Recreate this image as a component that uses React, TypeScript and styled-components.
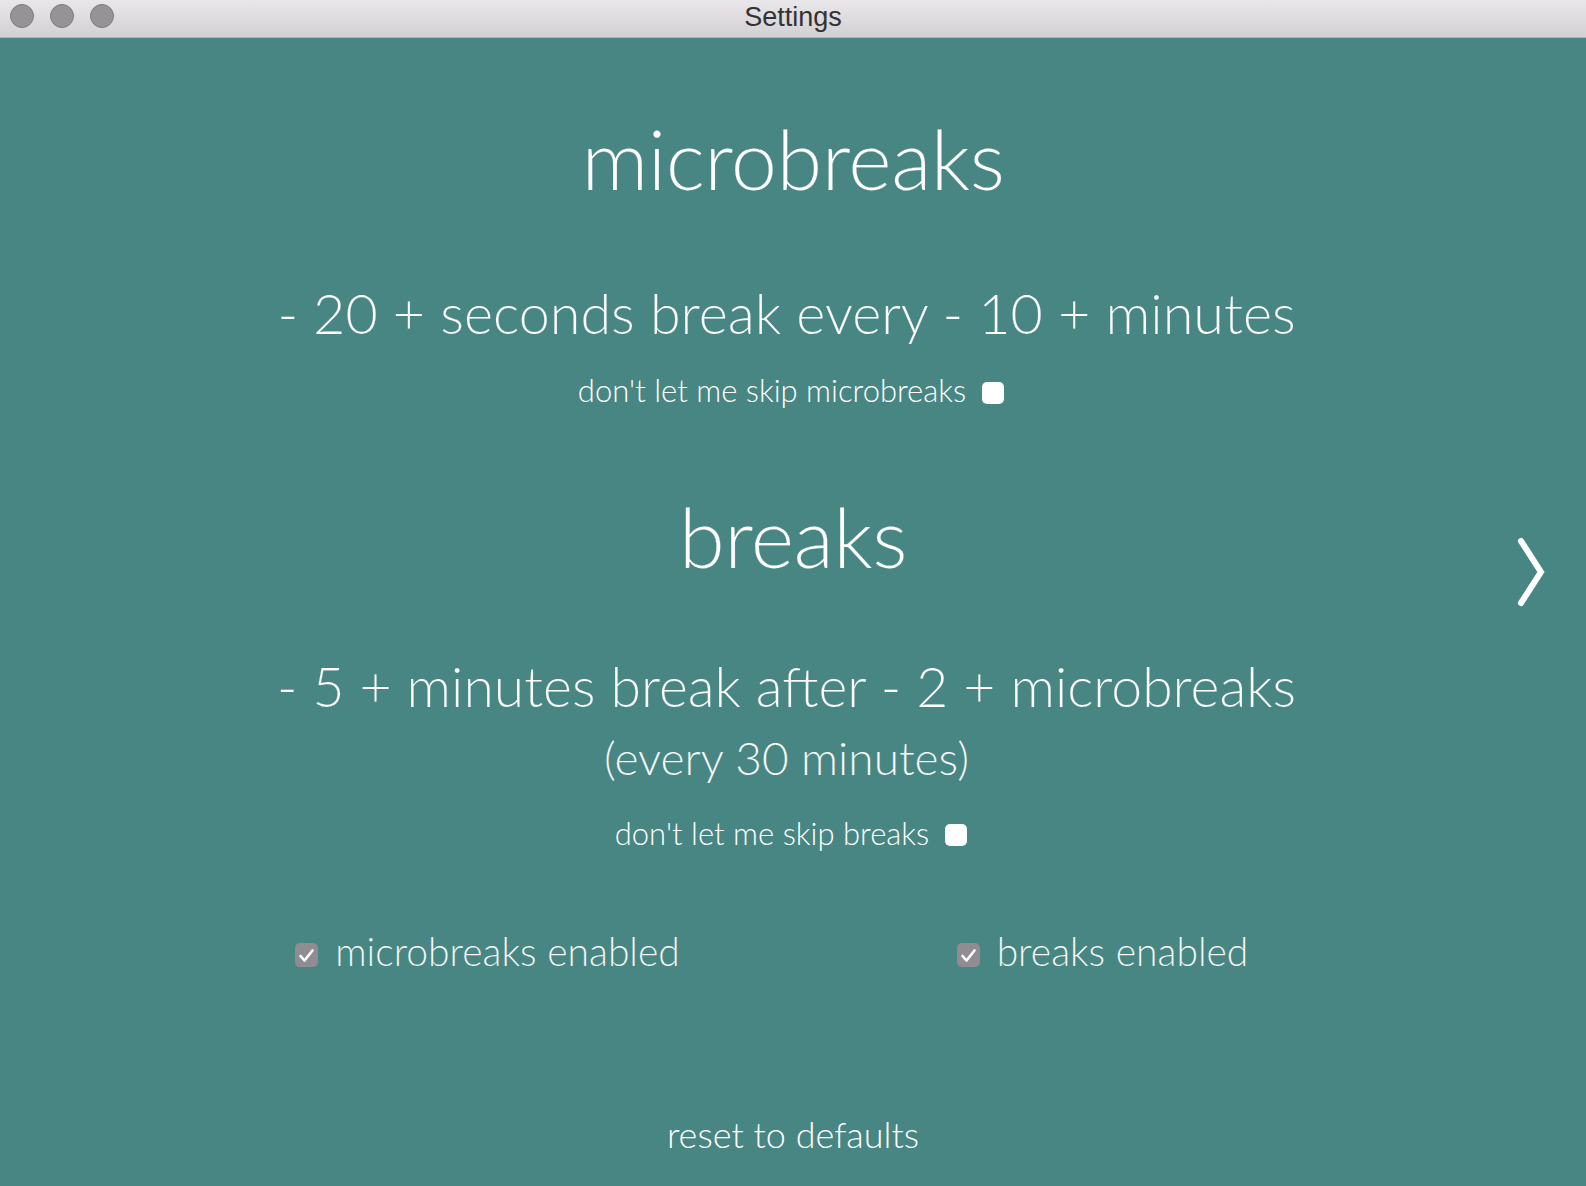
import React from "react";
import styled, { createGlobalStyle } from "styled-components";

const BG = "#488683";

const GlobalStyle = createGlobalStyle`
  html, body {
    margin: 0;
    padding: 0;
    background: ${BG};
  }
  body {
    font-family: Lato, "Open Sans", sans-serif;
    color: #ffffff;
  }
  * { box-sizing: border-box; }
`;

const Window = styled.div`
  display: flex;
  flex-direction: column;
  min-height: 100vh;
  background: ${BG};
`;

const TitleBar = styled.div`
  position: relative;
  height: 38px;
  display: flex;
  align-items: center;
  justify-content: center;
  background: linear-gradient(#e9e7e9, #d2d0d2);
  border-bottom: 1px solid #b3b1b3;
`;

const Lights = styled.div`
  position: absolute;
  left: 10px;
  top: 4px;
  display: flex;
  gap: 16px;
`;

const Light = styled.span`
  width: 24px;
  height: 24px;
  border-radius: 50%;
  background: #959396;
  border: 1px solid #7d7b7f;
`;

const Title = styled.div`
  font-family: "Liberation Sans", Arial, sans-serif;
  font-size: 27px;
  color: #333233;
  margin-top: -2px;
`;

const Body = styled.main`
  position: relative;
  flex: 1;
  display: flex;
  flex-direction: column;
  align-items: center;
  padding-top: 71px;
  font-weight: 300;
  -webkit-text-stroke: 0.012em ${BG};
`;

const Heading = styled.h1<{ $gap?: number }>`
  margin: ${(p) => p.$gap ?? 0}px 0 0;
  font-size: 83px;
  font-weight: 300;
  line-height: 1.2;
  letter-spacing: -0.5px;
`;

const Line = styled.div<{ $size: number; $gap: number }>`
  margin-top: ${(p) => p.$gap}px;
  padding-right: 13px;
  font-size: ${(p) => p.$size}px;
  line-height: 1.2;
  white-space: nowrap;
`;

const Step = styled.span`
  cursor: pointer;
`;

const SkipRow = styled.label<{ $gap: number }>`
  margin-top: ${(p) => p.$gap}px;
  padding-right: 4px;
  display: flex;
  align-items: center;
  gap: 16px;
  font-size: 31px;
  line-height: 1.2;
  -webkit-text-stroke: 0;
`;

const WhiteBox = styled.span`
  width: 22px;
  height: 22px;
  border-radius: 5px;
  background: #ffffff;
  margin-top: 4px;
`;

const EnabledGrid = styled.div`
  margin-top: 76px;
  width: 1230px;
  display: grid;
  grid-template-columns: 1fr 1fr;
  margin-left: 4px;
`;

const EnabledItem = styled.label`
  justify-self: center;
  display: flex;
  align-items: center;
  gap: 17px;
  font-size: 39px;
  line-height: 1.2;
`;

const GreyBox = styled.span`
  width: 23px;
  height: 24px;
  border-radius: 5px;
  background: #908c92;
  display: flex;
  align-items: center;
  justify-content: center;
  margin-top: 8px;
`;

const Reset = styled.div`
  margin-top: 138px;
  font-size: 36px;
  font-weight: 300;
  line-height: 1.2;
  -webkit-text-stroke: 0;
  cursor: pointer;
`;

const NextArrow = styled.div`
  position: absolute;
  right: 41px;
  top: 499px;
  width: 28px;
  height: 70px;
  cursor: pointer;
`;

const Check = () => (
  <svg width="17" height="15" viewBox="0 0 17 15">
    <polyline
      points="2.5,8 6.5,12.5 14.5,2.5"
      fill="none"
      stroke="#ffffff"
      strokeWidth="2.6"
      strokeLinecap="round"
      strokeLinejoin="round"
    />
  </svg>
);

export default function App() {
  return (
    <>
      <GlobalStyle />
      <Window>
        <TitleBar>
          <Lights>
            <Light />
            <Light />
            <Light />
          </Lights>
          <Title>Settings</Title>
        </TitleBar>
        <Body>
          <Heading>microbreaks</Heading>
          <Line $size={55.7} $gap={71}>
            <Step>-</Step> 20 <Step>+</Step> seconds break every <Step>-</Step> 10 <Step>+</Step> minutes
          </Line>
          <SkipRow $gap={26}>
            don't let me skip microbreaks
            <WhiteBox />
          </SkipRow>
          <Heading $gap={77}>breaks</Heading>
          <Line $size={55.3} $gap={67}>
            <Step>-</Step> 5 <Step>+</Step> minutes break after <Step>-</Step> 2 <Step>+</Step> microbreaks
          </Line>
          <Line $size={46} $gap={10}>(every 30 minutes)</Line>
          <SkipRow $gap={30}>
            don't let me skip breaks
            <WhiteBox />
          </SkipRow>
          <EnabledGrid>
            <EnabledItem>
              <GreyBox>
                <Check />
              </GreyBox>
              microbreaks enabled
            </EnabledItem>
            <EnabledItem>
              <GreyBox>
                <Check />
              </GreyBox>
              breaks enabled
            </EnabledItem>
          </EnabledGrid>
          <Reset>reset to defaults</Reset>
          <NextArrow>
            <svg width="28" height="70" viewBox="0 0 28 70">
              <polyline
                points="4,4 24,35 4,66"
                fill="none"
                stroke="#ffffff"
                strokeWidth="6"
                strokeLinecap="round"
                strokeLinejoin="miter"
              />
            </svg>
          </NextArrow>
        </Body>
      </Window>
    </>
  );
}
